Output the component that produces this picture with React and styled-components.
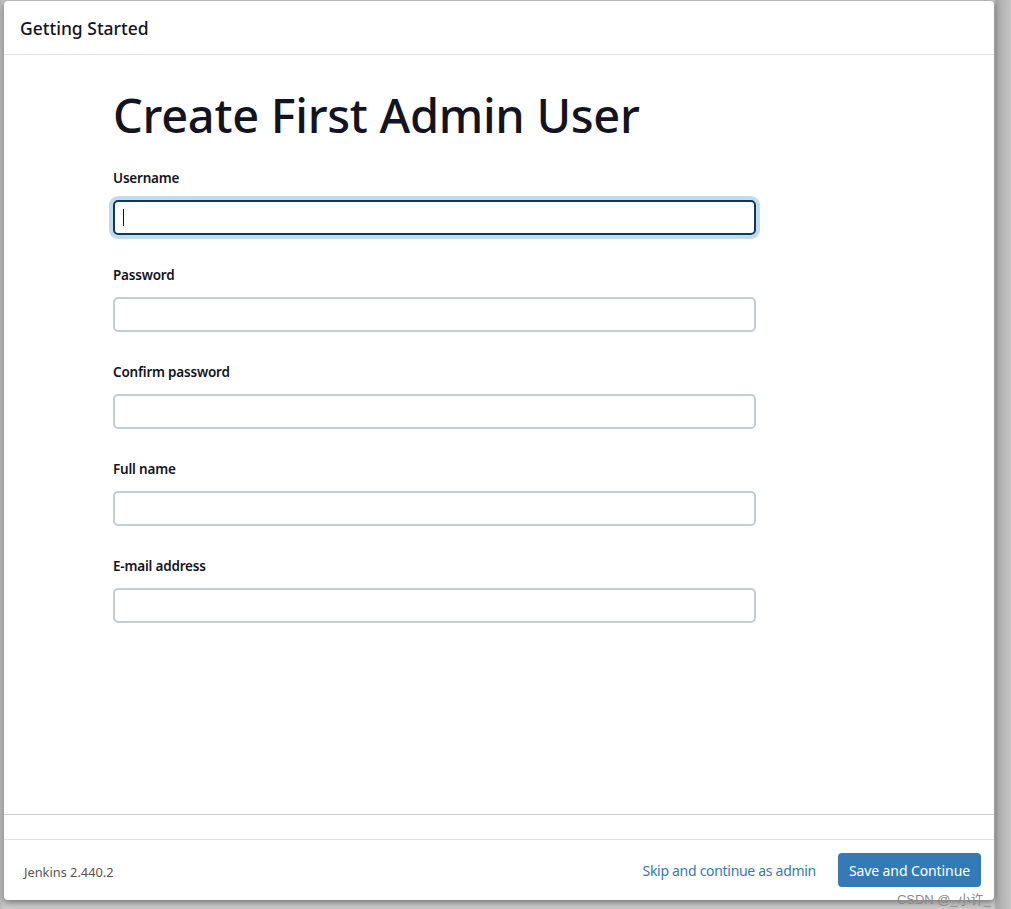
import React from "react";
import styled, { createGlobalStyle } from "styled-components";

const GlobalStyle = createGlobalStyle`
  html, body {
    margin: 0;
    padding: 0;
    background: #c4c4c4;
    font-family: "Noto Sans", "Open Sans", sans-serif;
    color: #14141f;
  }
`;

const fields = [
  { label: "Username", focused: true },
  { label: "Password", type: "password" },
  { label: "Confirm password", type: "password" },
  { label: "Full name" },
  { label: "E-mail address" },
];

export default function App() {
  return (
    <>
      <GlobalStyle />
      <Backdrop>
        <Modal>
          <Header>Getting Started</Header>
          <Body>
            <Title>Create First Admin User</Title>
            <Form>
              {fields.map((f) => (
                <Field key={f.label}>
                  <Label>{f.label}</Label>
                  <InputBox $focused={f.focused}>
                    {f.focused && <Caret />}
                  </InputBox>
                </Field>
              ))}
            </Form>
          </Body>
          <Spacer />
          <Footer>
            <Version>Jenkins 2.440.2</Version>
            <Actions>
              <SkipLink href="#">Skip and continue as admin</SkipLink>
              <PrimaryButton>Save and Continue</PrimaryButton>
            </Actions>
          </Footer>
        </Modal>
        <Watermark>CSDN @_小许_</Watermark>
      </Backdrop>
    </>
  );
}

const Backdrop = styled.div`
  position: relative;
  width: 1011px;
  height: 909px;
  padding: 1px 0 0 4px;
  box-sizing: border-box;
  background: linear-gradient(to right, #b8b8b8 0px, #c8c8c8 4px, #c8c8c8 994px, #a8a8a8 996px, #c6c6c6 1011px);
`;

const Modal = styled.div`
  width: 990px;
  height: 899px;
  background: #fff;
  border-radius: 4px;
  box-shadow: 0 2px 6px rgba(0, 0, 0, 0.45);
  display: flex;
  flex-direction: column;
  overflow: hidden;
`;

const Header = styled.div`
  height: 54px;
  box-sizing: border-box;
  padding: 0 16px;
  display: flex;
  align-items: center;
  font-size: 17.5px;
  font-weight: 500;
  border-bottom: 1px solid #e2e2e2;
`;

const Body = styled.div`
  flex: 1;
  padding: 30px 0 0 109px;
`;

const Title = styled.h1`
  margin: 0 0 23px;
  font-size: 47px;
  font-weight: 500;
  line-height: 60px;
  letter-spacing: -0.3px;
`;

const Form = styled.div`
  display: flex;
  flex-direction: column;
  gap: 30px;
`;

const Field = styled.div`
  display: flex;
  flex-direction: column;
  gap: 12px;
`;

const Label = styled.label`
  font-size: 13.5px;
  font-weight: 600;
  line-height: 20px;
  letter-spacing: -0.2px;
`;

const InputBox = styled.div`
  width: 643px;
  height: 35px;
  box-sizing: border-box;
  border: 2px solid ${(p) => (p.$focused ? "#0b3a5c" : "#c3cdd3")};
  border-radius: 5px;
  box-shadow: ${(p) => (p.$focused ? "0 0 0 4px #c2dbe9" : "none")};
  display: flex;
  align-items: center;
  padding-left: 8px;
`;

const Caret = styled.span`
  width: 1px;
  height: 17px;
  background: #14141f;
`;

const Spacer = styled.div`
  height: 24px;
  border-top: 1px solid #d0d0d0;
  border-bottom: 1px solid #e2e2e2;
`;

const Footer = styled.div`
  height: 60px;
  display: flex;
  align-items: center;
  justify-content: space-between;
  padding: 0 13px 0 20px;
`;

const Version = styled.span`
  font-size: 12.8px;
  color: #555;
  margin-top: 4px;
`;

const Actions = styled.div`
  display: flex;
  align-items: center;
  gap: 22px;
`;

const SkipLink = styled.a`
  color: #337ab7;
  font-size: 14px;
  letter-spacing: -0.3px;
  text-decoration: none;
`;

const PrimaryButton = styled.button`
  background: #337ab7;
  color: #fff;
  border: none;
  border-radius: 4px;
  height: 34px;
  padding: 0 11px;
  font-family: inherit;
  font-size: 14px;
  letter-spacing: -0.1px;
`;

const Watermark = styled.span`
  position: absolute;
  right: 20px;
  bottom: 1px;
  font-family: "Liberation Sans", "Noto Sans CJK SC", sans-serif;
  font-size: 13px;
  color: #8a8a8a;
`;
